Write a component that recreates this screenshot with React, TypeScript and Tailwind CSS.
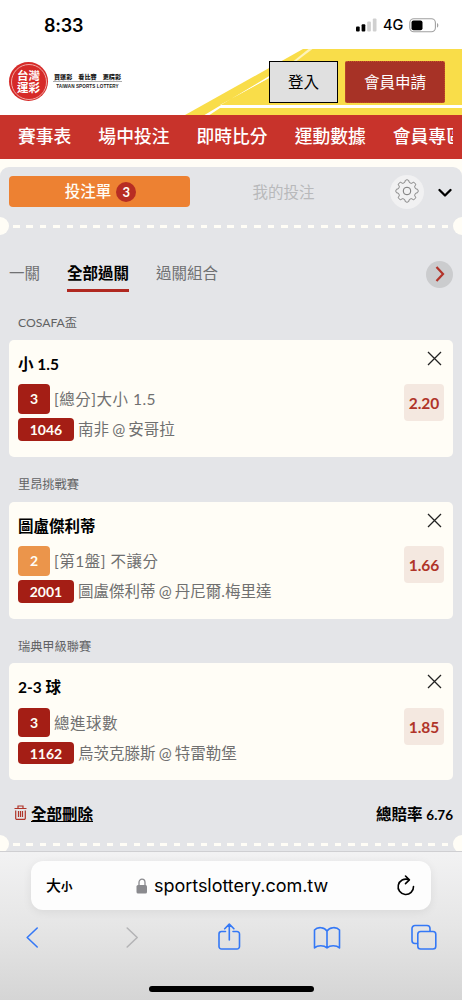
import type { ReactNode } from 'react'

interface Bet {
  league: string
  pick: string
  min: number
  market: string
  code: string
  match: string
  odds: string
  orange?: boolean
}

const bets: Bet[] = [
  { league: 'COSAFA盃', pick: '小 1.5', min: 3, market: '[總分]大小 1.5', code: '1046', match: '南非 @ 安哥拉', odds: '2.20' },
  { league: '里昂挑戰賽', pick: '圖盧傑利蒂', min: 2, market: '[第1盤] 不讓分', code: '2001', match: '圖盧傑利蒂 @ 丹尼爾.梅里達', odds: '1.66', orange: true },
  { league: '瑞典甲級聯賽', pick: '2-3 球', min: 3, market: '總進球數', code: '1162', match: '烏茨克滕斯 @ 特雷勒堡', odds: '1.85' },
]

const navItems = ['賽事表', '場中投注', '即時比分', '運動數據', '會員專區']

// eight rounded teeth, r swings between 8.7 and 11.1
const gearPath = (() => {
  const pts: string[] = []
  for (let i = 0; i < 160; i++) {
    const a = (i / 160) * Math.PI * 2
    const r = 9.9 + 1.25 * Math.tanh(2.2 * Math.cos(a * 8))
    pts.push(`${(12 + r * Math.sin(a)).toFixed(2)} ${(12 - r * Math.cos(a)).toFixed(2)}`)
  }
  return `M${pts.join('L')}Z`
})()

function StatusBar() {
  return (
    <div className="flex h-[49px] items-start justify-between bg-white pr-[23px] pl-[44px] font-['Inter','Liberation_Sans',sans-serif] text-black">
      <span className="mt-[13.5px] text-[18px] leading-[24px] font-semibold tracking-[-0.2px]">8:33</span>
      <div className="mt-[17px] flex h-4 items-center">
        <svg width="21" height="14" viewBox="0 0 21 14">
          <rect x="0" y="8.5" width="3.7" height="5" rx="1" />
          <rect x="5.6" y="6.2" width="3.7" height="7.3" rx="1" />
          <rect x="11.2" y="3.5" width="3.7" height="10" rx="1" fill="#d0d0d0" />
          <rect x="16.8" y="0.6" width="3.7" height="12.9" rx="1" fill="#d0d0d0" />
        </svg>
        <span className="ml-[6px] w-[26px] text-[14.5px] leading-4 font-medium">4G</span>
        <svg width="30" height="15" viewBox="0 0 30 15">
          <rect x="0.8" y="0.8" width="25.6" height="13" rx="4" fill="none" stroke="#a0a0a0" strokeWidth="1.1" />
          <rect x="2.5" y="2.5" width="11" height="9.7" rx="2" />
          <path d="M28 5v4.600c1-.4 1.300-1.300 1.300-2.300S29 5.400 28 5Z" fill="#a0a0a0" />
        </svg>
      </div>
    </div>
  )
}

function Header() {
  return (
    <header className="relative flex h-[66px] justify-between bg-white">
      <svg className="absolute inset-0" width="462" height="66" viewBox="0 0 462 66">
        <path d="M185 66L303 0H462V66Z" fill="#f9dd49" />
        <path d="M204.500 66L270 26.500V28.800L220 56H462V59H220L209.500 66Z" fill="#fff" />
        <path d="M221 56H462L270 56L270 28.800Z" fill="#f9dd49" />
        <path d="M293 12.500L308.500 0H312.500L296 12.500Z" fill="#fdf3bc" />
      </svg>
      <div className="relative flex items-start">
        <div className="mt-[13px] ml-[9px] flex size-[39px] items-center justify-center rounded-full bg-[#d62a28] p-[1.500px]">
          <div className="flex size-full items-center justify-center rounded-full border border-[#f0a9a5] text-center text-[11.500px] leading-[11.500px] font-bold text-white">
            <span>台灣<br />運彩</span>
          </div>
        </div>
        <div className="mt-[22.5px] ml-[5px] w-[69px] text-[#222]">
          <div className="flex h-[10px] justify-between border-b border-[#aaa] px-px text-[6.100px] leading-[9px] font-black">
            <span>買運彩</span>
            <span>看比賽</span>
            <span>更精彩</span>
          </div>
          <div className="pt-px text-center font-['Liberation_Sans',sans-serif] text-[4.600px] leading-[8px] font-bold tracking-[0.1px] whitespace-nowrap">TAIWAN SPORTS LOTTERY</div>
        </div>
      </div>
      <div className="relative mt-3 mr-[17px] flex h-[42px] gap-[7px] text-[15.500px]">
        <button className="w-[69px] border border-black bg-[#e0e0e0] pt-px text-black">登入</button>
        <button className="w-[100px] rounded-[2px] border border-dotted border-[#c4532d] bg-[#a73226] pt-px text-white">會員申請</button>
      </div>
    </header>
  )
}

function Perforation() {
  return (
    <div className="relative flex h-[18px] items-center overflow-hidden">
      <i className="absolute -left-[9px] size-[18px] rounded-full bg-[#fffdf6]" />
      <div className="ml-[13.300px] h-[3px] w-[436px] bg-[repeating-linear-gradient(90deg,#fffdf6_0_6.700px,transparent_6.700px_13.400px)]" />
      <i className="absolute -right-[9px] size-[18px] rounded-full bg-[#fffdf6]" />
    </div>
  )
}

function BetCard({ bet }: { bet: Bet }) {
  return (
    <section className="h-[161.700px]">
      <h3 className="h-[34.500px] pl-[18px] text-[12.200px] leading-[35px] text-[#616264]">{bet.league}</h3>
      <div className="mx-[9px] flex h-[117px] justify-between rounded-[5px] bg-[#fffdf6] px-[9px]">
        <div>
          <div className="pt-[13px] text-[15.500px] leading-[23px] font-bold text-black">{bet.pick}</div>
          <div className="mt-[8.500px] flex h-[29.500px] items-center">
            <span className={`h-[29.500px] w-[32px] rounded-[4px] text-center text-[14px] leading-[30px] font-bold text-[#fffdf6] ${bet.orange ? 'bg-[#eb954b]' : 'bg-[#a41e15]'}`}>{bet.min}</span>
            <span className="ml-1 pt-px text-[15.500px] leading-[29px] tracking-[0.5px] text-[#707070]">{bet.market}</span>
          </div>
          <div className="mt-[4.500px] flex h-[22.500px] items-center">
            <span className="h-[22.500px] w-[56px] rounded-[4px] bg-[#a41e15] text-center text-[14px] leading-[23px] font-bold text-[#fffdf6]">{bet.code}</span>
            <span className="-mt-px ml-1 text-[15.500px] leading-[22px] text-[#707070] [word-spacing:-0.8px]">{bet.match}</span>
          </div>
        </div>
        <div className="flex flex-col items-end">
          <svg className="mt-[11px] mr-[2px]" width="15" height="15" viewBox="0 0 15 15" fill="none" stroke="#222" strokeWidth="1.3">
            <path d="M1 1L14 14M14 1L1 14" />
          </svg>
          <span className="mt-[18.500px] h-[37px] w-10 rounded-[4px] bg-[#f4e8e0] text-center text-[15.500px] leading-[38px] font-bold text-[#b03429]">{bet.odds}</span>
        </div>
      </div>
    </section>
  )
}

function ToolIcon({ children, color = '#3478f6' }: { children: ReactNode; color?: string }) {
  return (
    <svg width="30" height="30" viewBox="0 0 30 30" fill="none" stroke={color} strokeWidth="1.6" strokeLinecap="round" strokeLinejoin="round">
      {children}
    </svg>
  )
}

function BrowserBar() {
  return (
    <footer className="h-[149px] border-t border-[#cfcfd2] bg-linear-to-b from-[#f2f2f3] via-[#e6e6e6] to-[#d5d5d5] pt-[9px]">
      <div className="mx-[31px] flex h-[49px] items-center rounded-[12px] bg-[#fdfdfd] pr-[14px] pl-[15px] text-black shadow-[0_2px_10px_rgba(0,0,0,0.07)]">
        <div className="flex w-[90px] items-baseline font-medium">
          <span className="text-[15px]">大</span>
          <span className="text-[11.500px] font-bold">小</span>
        </div>
        <svg width="12" height="16" viewBox="0 0 12 16">
          <path d="M3 8V4.500a3 3.300 0 0 1 6 0V8" fill="none" stroke="#8a8a8e" strokeWidth="1.3" />
          <rect x="0.500" y="7" width="10.500" height="8.500" rx="1.500" fill="#8a8a8e" />
        </svg>
        <span className="ml-[6px] font-['Inter','Liberation_Sans',sans-serif] text-[18px] tracking-[-0.040px]">sportslottery.com.tw</span>
        <svg className="ml-auto" width="22" height="24" viewBox="0 0 22 24" fill="none" stroke="#000" strokeWidth="1.600" strokeLinecap="round" strokeLinejoin="round">
          <path d="M18.500 12.500A7.700 7.700 0 1 1 13.500 5.600M10.500 2L14.400 5.900L10.500 9.600" />
        </svg>
      </div>
      <div className="mt-[13px] flex justify-between px-[23px]">
        <ToolIcon>
          <path d="M14.200 5L4.200 14.500L14.200 24" />
        </ToolIcon>
        <ToolIcon color="#b4b4b6">
          <path d="M7.200 5L17.200 14.500L7.200 24" />
        </ToolIcon>
        <ToolIcon>
          <path d="M9.500 8.500H5.500a2.500 2.500 0 0 0-2.500 2.500V23.500a2.500 2.500 0 0 0 2.500 2.500h15.500a2.500 2.500 0 0 0 2.500-2.500V11A2.500 2.500 0 0 0 21 8.500h-4M13.300 17V1.300M8.700 5.800L13.300 1.100L17.900 5.800" />
        </ToolIcon>
        <ToolIcon>
          <path d="M14 8C11.500 4 4.500 3.500 1.500 7V25C4.500 22 11 22 14 25C17 22 23.500 22 26.500 25V7C23.500 3.500 16.500 4 14 8V25" />
        </ToolIcon>
        <ToolIcon>
          <path d="M8.500 20.500H6a3 3 0 0 1-3-3V5.500a3 3 0 0 1 3-3h12a3 3 0 0 1 3 3v2.500" />
          <rect x="8.800" y="8.500" width="18" height="17.500" rx="2.800" />
        </ToolIcon>
      </div>
      <div className="mx-auto mt-[33px] h-[6px] w-[165px] rounded-full bg-black" />
    </footer>
  )
}

export default function App() {
  return (
    <div lang="zh-Hant" className="h-[1000px] w-[462px] overflow-hidden bg-[#fffdf6] font-['Lato','Noto_Sans_CJK_TC',sans-serif]">
      <StatusBar />
      <Header />
      <nav className="h-[43.500px] bg-[#c8332b] px-[9px]">
        <div className="flex gap-[27px] overflow-hidden pl-[9px] text-[17.800px] leading-[43px] font-medium whitespace-nowrap text-white">
          {navItems.map((item) => (
            <span key={item} className="shrink-0">{item}</span>
          ))}
        </div>
      </nav>
      <main className="mt-[8.500px] h-[684px] rounded-t-[9px] bg-[#e4e5e8]">
        <div className="flex h-[50px] items-start pt-[9px] pl-[9px]">
          <div className="flex h-[31px] w-[181px] items-center justify-center gap-[5px] rounded-[4px] bg-[#ed8132] pt-px pl-[2px] text-[15.500px] font-medium text-[#fffdf6]">
            <span>投注單</span>
            <span className="size-5 rounded-full bg-[#b72d23] text-center text-[13px] leading-5 font-bold">3</span>
          </div>
          <div className="w-[187px] text-center text-[15.500px] leading-[32px] text-[#b8b9bb]">我的投注</div>
          <div className="-mt-px ml-[13px] flex size-[34px] items-center justify-center rounded-full bg-[#f1f1f2]">
            <svg className="-mt-0.5" width="24" height="24" viewBox="0 0 24 24" fill="none" stroke="#777" strokeWidth="1">
              <path d={gearPath} />
              <circle cx="12" cy="12" r="3.800" />
            </svg>
          </div>
          <svg className="mt-[12px] ml-[14px]" width="14" height="10" viewBox="0 0 14 10" fill="none" stroke="#000" strokeWidth="2.300" strokeLinecap="round" strokeLinejoin="round">
            <path d="M1.500 2L7 7.500L12.500 2" />
          </svg>
        </div>
        <Perforation />
        <div className="flex h-[70.400px] items-start pt-[25.500px] pr-[9px] pl-[9px] text-[15.500px] leading-[25px] text-[#707173]">
          <span>一關</span>
          <span className="ml-[27px] h-[31px] border-b-[3px] border-[#b02820] font-bold text-black">全部過關</span>
          <span className="ml-[27px]">過關組合</span>
          <span className="ml-auto flex size-[27px] items-center justify-center rounded-full bg-[#cbccce]">
            <svg width="10" height="16" viewBox="0 0 10 16" fill="none" stroke="#b33329" strokeWidth="2.200">
              <path d="M1.500 1L8 8L1.500 15" />
            </svg>
          </span>
        </div>
        {bets.map((bet) => (
          <BetCard key={bet.code} bet={bet} />
        ))}
        <div className="flex h-[44.600px] items-center justify-between pt-[4px] pr-[9px] pl-[14px] text-[15.500px] font-bold text-black">
          <div className="flex items-center gap-[4px]">
            <svg className="-mt-[5px]" width="13" height="15" viewBox="0 0 13 15" fill="none" stroke="#b03429" strokeWidth="1.200">
              <path d="M0.500 3.500H12.500M4 3.500V1H9V3.500M1.700 5.500V13.200a1.200 1.200 0 0 0 1.200 1.200H10.100a1.200 1.200 0 0 0 1.200-1.200V5.500M4.500 6V12M6.500 6V12M8.500 6V12" />
            </svg>
            <span className="underline">全部刪除</span>
          </div>
          <span>總賠率 <span className="text-[13.500px]">6.76</span></span>
        </div>
        <div className="h-4 overflow-hidden">
          <Perforation />
        </div>
      </main>
      <BrowserBar />
    </div>
  )
}
